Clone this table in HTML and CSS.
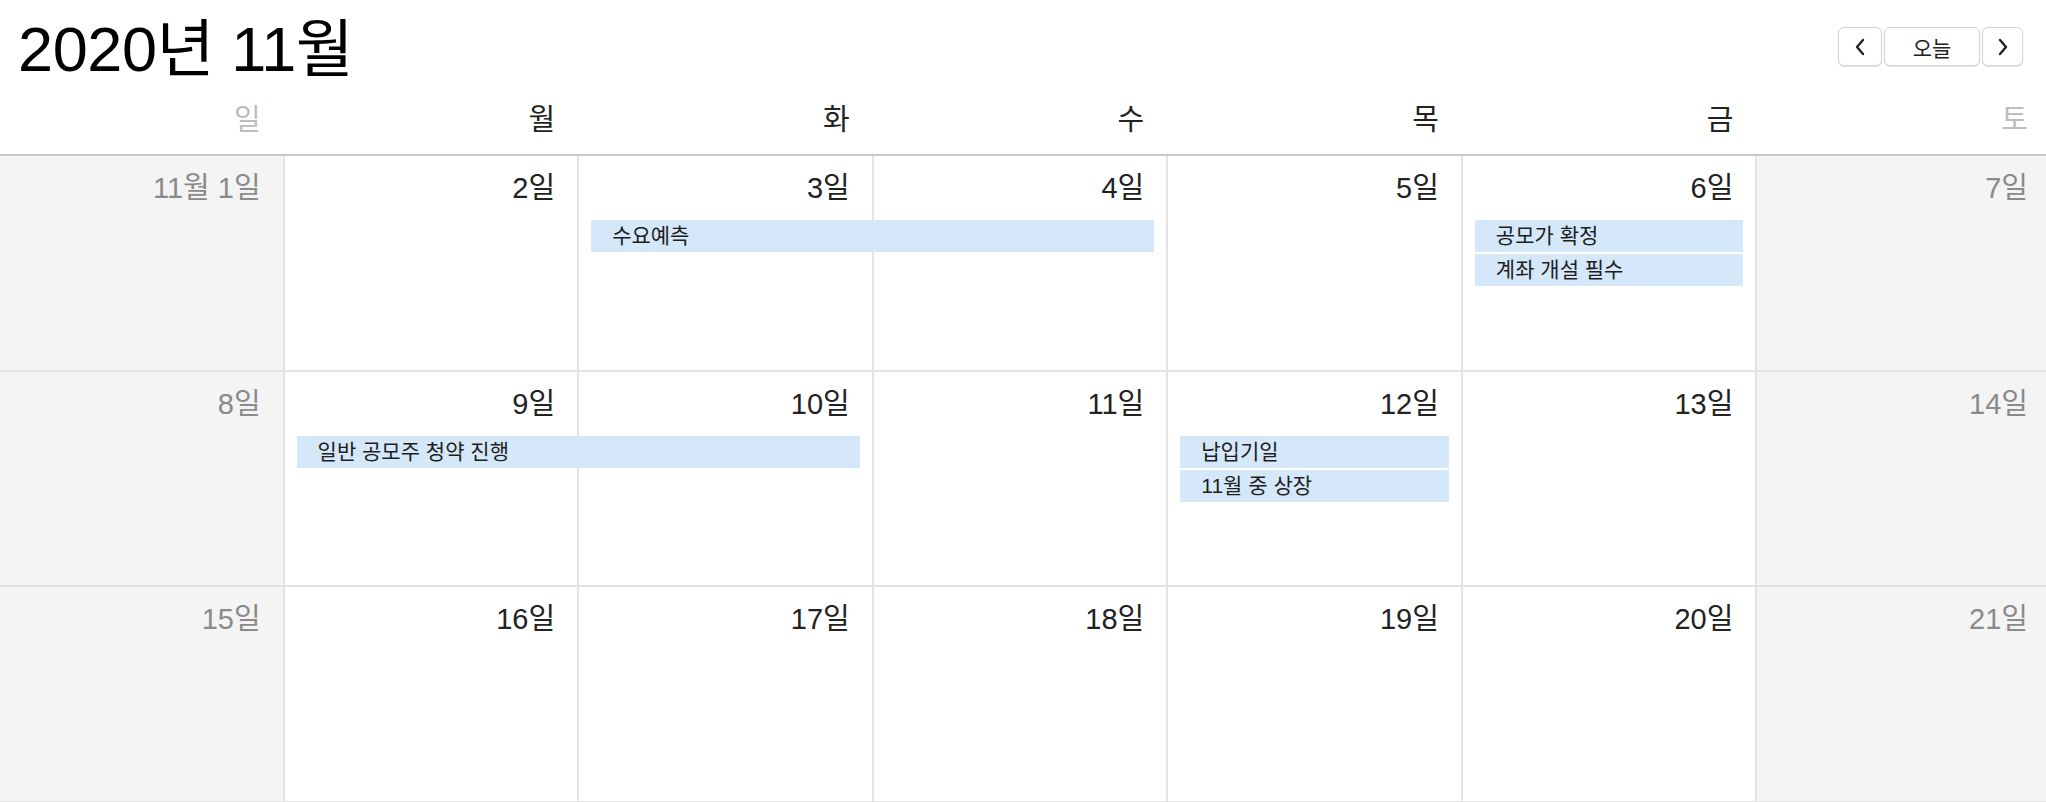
FILE: index.html
```html
<!DOCTYPE html>
<html lang="ko">
<head>
<meta charset="utf-8">
<title>2020년 11월</title>
<link rel="stylesheet" href="styles.css">
</head>
<body>
<div class="page">
  <header class="toolbar">
    <h1 class="title">2020년 11월</h1>
    <div class="nav">
      <button class="btn btn-icon" aria-label="이전">
        <svg width="12" height="18" viewBox="0 0 12 18"><path d="M9 2 L3 9 L9 16" fill="none" stroke="#222" stroke-width="2.4" stroke-linecap="round" stroke-linejoin="round"/></svg>
      </button>
      <button class="btn btn-today">오늘</button>
      <button class="btn btn-icon btn-next" aria-label="다음">
        <svg width="12" height="18" viewBox="0 0 12 18"><path d="M3 2 L9 9 L3 16" fill="none" stroke="#222" stroke-width="2.4" stroke-linecap="round" stroke-linejoin="round"/></svg>
      </button>
    </div>
  </header>

  <div class="calendar">
    <div class="dow">
      <div class="dow-cell weekend">일</div>
      <div class="dow-cell">월</div>
      <div class="dow-cell">화</div>
      <div class="dow-cell">수</div>
      <div class="dow-cell">목</div>
      <div class="dow-cell">금</div>
      <div class="dow-cell weekend">토</div>
    </div>

    <div class="week">
      <div class="day weekend"><span class="num">11월 1일</span></div>
      <div class="day"><span class="num">2일</span></div>
      <div class="day"><span class="num">3일</span></div>
      <div class="day"><span class="num">4일</span></div>
      <div class="day"><span class="num">5일</span></div>
      <div class="day"><span class="num">6일</span></div>
      <div class="day weekend"><span class="num">7일</span></div>
      <div class="event col-3 span-2 lane-1">수요예측</div>
      <div class="event col-6 span-1 lane-1">공모가 확정</div>
      <div class="event col-6 span-1 lane-2">계좌 개설 필수</div>
    </div>

    <div class="week">
      <div class="day weekend"><span class="num">8일</span></div>
      <div class="day"><span class="num">9일</span></div>
      <div class="day"><span class="num">10일</span></div>
      <div class="day"><span class="num">11일</span></div>
      <div class="day"><span class="num">12일</span></div>
      <div class="day"><span class="num">13일</span></div>
      <div class="day weekend"><span class="num">14일</span></div>
      <div class="event col-2 span-2 lane-1">일반 공모주 청약 진행</div>
      <div class="event col-5 span-1 lane-1">납입기일</div>
      <div class="event col-5 span-1 lane-2">11월 중 상장</div>
    </div>

    <div class="week">
      <div class="day weekend"><span class="num">15일</span></div>
      <div class="day"><span class="num">16일</span></div>
      <div class="day"><span class="num">17일</span></div>
      <div class="day"><span class="num">18일</span></div>
      <div class="day"><span class="num">19일</span></div>
      <div class="day"><span class="num">20일</span></div>
      <div class="day weekend"><span class="num">21일</span></div>
    </div>
  </div>
</div>
</body>
</html>
```

FILE: styles.css
```css
* { box-sizing: border-box; }

html, body {
  margin: 0;
  padding: 0;
  background: #fff;
  overflow: hidden;
}

body {
  font-family: "Liberation Sans", "Noto Sans CJK KR", Arial, sans-serif;
  color: #222;
  width: 2046px;
}

.toolbar {
  display: flex;
  align-items: flex-start;
  justify-content: space-between;
  height: 92px;
  padding: 0 23px 0 18px;
}

.title {
  margin: 0;
  font-weight: 400;
  font-size: 63px;
  line-height: 62px;
  padding-top: 18px;
  color: #000;
  letter-spacing: -0.4px;
}

.nav {
  display: flex;
  gap: 2px;
  padding-top: 27px;
}

.btn {
  display: flex;
  align-items: center;
  justify-content: center;
  height: 39px;
  background: #fff;
  border: 1px solid #d2d2d2;
  border-radius: 6px;
  box-shadow: 0 1px 1px rgba(0, 0, 0, 0.12);
  font-family: inherit;
  color: #222;
  padding: 0;
}

.btn-icon { width: 44px; }
.btn-next { width: 41px; }

.btn-today {
  width: 96px;
  font-size: 21px;
}

.calendar {
  width: 2062px;
  margin-left: -12px;
}

.dow {
  display: grid;
  grid-template-columns: repeat(7, minmax(0, 1fr));
  height: 64px;
  border-bottom: 2px solid #c8c8c8;
}

.dow-cell {
  text-align: right;
  padding: 10px 22px 0 0;
  font-size: 29px;
  line-height: 36px;
  color: #222;
}

.dow-cell.weekend { color: #bdbdbd; }

.week {
  display: grid;
  grid-template-columns: repeat(7, minmax(0, 1fr));
  grid-template-rows: 62px 32px 32px 1fr;
  row-gap: 2px;
  height: 215.5px;
  border-bottom: 2px solid #e3e3e3;
}

.day {
  grid-row: 1 / -1;
  border-left: 2px solid #e3e3e3;
  text-align: right;
  padding: 14px 22px 0 0;
  background: #fff;
}

.day:nth-child(1) { grid-column: 1; }
.day:nth-child(2) { grid-column: 2; }
.day:nth-child(3) { grid-column: 3; }
.day:nth-child(4) { grid-column: 4; }
.day:nth-child(5) { grid-column: 5; }
.day:nth-child(6) { grid-column: 6; }
.day:nth-child(7) { grid-column: 7; }

.day.weekend { background: #f4f4f4; }

.num {
  font-size: 29px;
  line-height: 36px;
  color: #222;
}

.weekend .num { color: #8a8a8a; }

.event {
  margin: 0 12px 0 14px;
  background: #d4e8f9;
  font-size: 21px;
  line-height: 32px;
  padding-left: 21px;
  color: #1e1e1e;
  white-space: nowrap;
  overflow: hidden;
}

.col-2 { grid-column-start: 2; }
.col-3 { grid-column-start: 3; }
.col-5 { grid-column-start: 5; }
.col-6 { grid-column-start: 6; }
.span-1 { grid-column-end: span 1; }
.span-2 { grid-column-end: span 2; }
.lane-1 { grid-row: 2; }
.lane-2 { grid-row: 3; }
```
